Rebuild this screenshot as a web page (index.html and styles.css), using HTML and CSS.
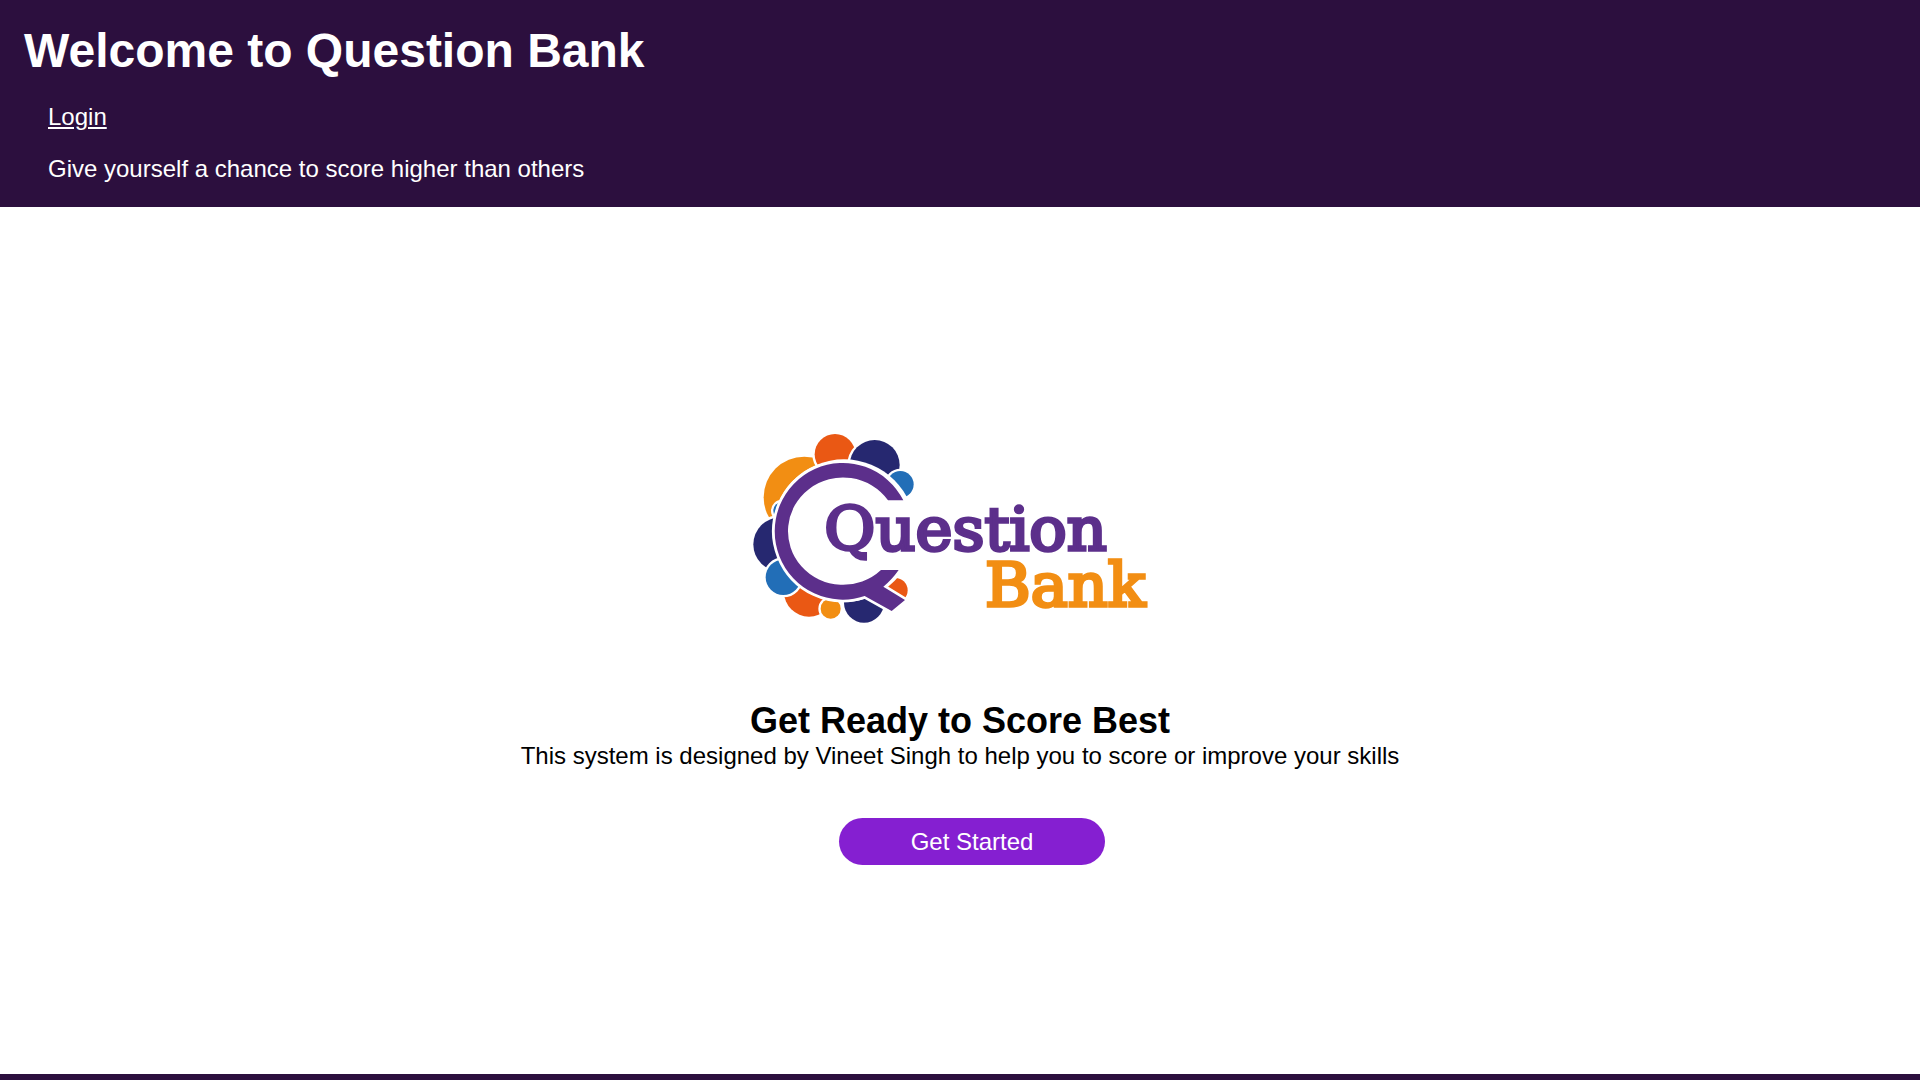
FILE: index.html
```html
<!DOCTYPE html>
<html lang="en">
<head>
<meta charset="utf-8">
<title>Question Bank</title>
<link rel="stylesheet" href="styles.css">
</head>
<body>
<header class="header">
  <h1 class="title">Welcome to Question Bank</h1>
  <a class="login" href="#">Login</a>
  <p class="tagline">Give yourself a chance to score higher than others</p>
</header>
<main class="main">
  <svg class="logo" viewBox="0 0 1380 720" role="img" aria-label="Question Bank">
    <g stroke="#fff" stroke-width="14" paint-order="stroke">
      <circle cx="223" cy="262" r="122" fill="#f28e13"/>
      <circle cx="315" cy="133" r="61" fill="#ea5814"/>
      <circle cx="434" cy="165" r="75" fill="#262870"/>
      <circle cx="511" cy="223" r="40" fill="#226eb7"/>
      <circle cx="156" cy="302" r="26" fill="#226eb7"/>
      <circle cx="151" cy="403" r="81" fill="#262870"/>
      <circle cx="237" cy="545" r="75" fill="#ea5814"/>
      <circle cx="160" cy="502" r="53" fill="#226eb7"/>
      <circle cx="402" cy="578" r="60" fill="#262870"/>
      <circle cx="302" cy="596" r="30" fill="#f28e13"/>
      <circle cx="496" cy="541" r="37" fill="#ea5814"/>
    </g>
    <circle cx="342" cy="362" r="214" fill="#fff"/>
    <path d="M520 271A204 205 0 1 0 404 558L485 603L525 570L460 530Q485 510 506 480H453A165 161 0 1 1 474 271Z" fill="#5c2f8b" stroke="#fff" stroke-width="16" paint-order="stroke"/>
    <text class="word" x="283" y="420" textLength="848" lengthAdjust="spacingAndGlyphs" fill="#5c2f8b" stroke="#5c2f8b">Question</text>
    <text class="word" x="765" y="588" textLength="481" lengthAdjust="spacingAndGlyphs" fill="#f28e13" stroke="#f28e13">Bank</text>
  </svg>
  <h2 class="heading">Get Ready to Score Best</h2>
  <p class="text">This system is designed by Vineet Singh to help you to score or improve your skills</p>
  <button class="start">Get Started</button>
</main>
<footer class="footer"></footer>
</body>
</html>
```
FILE: styles.css
```css
* { margin: 0; padding: 0; box-sizing: border-box; }
body {
  height: 100vh;
  display: flex;
  flex-direction: column;
  overflow: hidden;
  background: #fff;
  color: #000;
  font: 24px/28px "Liberation Sans", Arial, sans-serif;
}
.header {
  height: 207px;
  padding: 23px 24px 0;
  display: flex;
  flex-direction: column;
  align-items: flex-start;
  background: #2c0f3e;
  color: #fff;
}
.title { font-size: 48px; line-height: 55px; white-space: nowrap; }
.login { margin: 25px 0 0 24px; color: #fff; }
.tagline { margin: 24px 0 0 24px; }
.main {
  flex: 1;
  padding-top: 203px;
  display: flex;
  flex-direction: column;
  align-items: center;
}
.logo { width: 460px; height: 240px; flex: none; }
.word {
  font: 182px "DejaVu Serif", serif;
  stroke-width: 10px;
}
.heading { margin-top: 50px; font-size: 36px; line-height: 41px; }
.text { margin-top: 1px; }
.start {
  width: 266px;
  height: 47px;
  margin: 48px 0 0 24px;
  border: 0;
  border-radius: 24px;
  background: #851fd1;
  color: #fff;
  font: inherit;
}
.footer { height: 6px; background: #2c0f3e; }
```
